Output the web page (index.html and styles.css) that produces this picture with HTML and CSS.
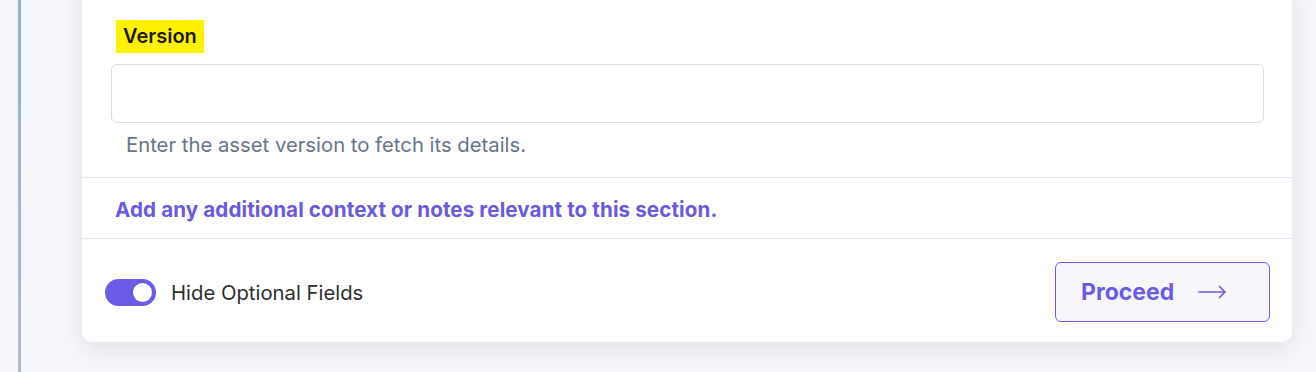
FILE: index.html
```html
<!DOCTYPE html>
<html>

<head>
  <meta charset="UTF-8">
  <title>Asset details</title>
  <link rel="stylesheet" href="styles.css">
</head>

<body>
  <div class="layout">
    <div class="rail"></div>
    <div class="main">
      <div class="card">
        <div class="field">
          <label class="field-label" for="version">Version</label>
          <input id="version" class="field-input" type="text">
          <p class="field-help">Enter the asset version to fetch its details.</p>
        </div>
        <div class="notes">Add any additional context or notes relevant to this section.</div>
        <div class="card-footer">
          <label class="toggle-row">
            <span class="toggle"><span class="toggle-knob"></span></span>
            <span class="toggle-text">Hide Optional Fields</span>
          </label>
          <button class="btn-proceed">
            Proceed
            <svg class="btn-arrow" width="29" height="14" viewBox="0 0 29 14" fill="none">
              <path d="M1 7h26M21.5 1.5L27 7l-5.5 5.5" stroke="currentColor" stroke-width="1.7" stroke-linecap="round" stroke-linejoin="round"/>
            </svg>
          </button>
        </div>
      </div>
    </div>
  </div>
</body>

</html>
```

FILE: styles.css
```css
body {
  margin: 0;
  background-color: #f6f7fb;
  font-family: Inter, "Noto Sans", sans-serif;
}

.layout {
  display: flex;
  height: 372px;
  overflow: hidden;
}

.rail {
  width: 3px;
  margin-left: 18px;
  background: linear-gradient(#93afdd, #b3b8d2);
}

.main {
  flex: 1;
  padding-left: 61px;
  padding-right: 24px;
}

.card {
  margin-top: -20px;
  background: #fff;
  border-radius: 10px;
  box-shadow: 0 6px 24px rgba(30, 35, 70, 0.10);
}

.field {
  padding: 40px 28px 0 29px;
}

.field-label {
  display: inline-block;
  margin-left: 5px;
  padding: 4px 7px;
  background-color: #fff200;
  color: #1a1a1a;
  font-size: 20px;
  font-weight: 600;
  line-height: 25px;
}

.field-input {
  display: block;
  box-sizing: border-box;
  width: 100%;
  height: 59px;
  margin-top: 11px;
  border: 1px solid #dcdcdc;
  border-radius: 6px;
}

.field-help {
  margin: 0;
  padding: 10px 0 20px 15px;
  color: #66758c;
  font-size: 20.3px;
  line-height: 24px;
}

.notes {
  border-top: 1px solid #e3e5ee;
  border-bottom: 1px solid #e3e5ee;
  padding: 20px 33px 16px;
  color: #6a5ae0;
  font-size: 20.6px;
  font-weight: 700;
  letter-spacing: 0.1px;
  line-height: 24px;
}

.card-footer {
  display: flex;
  justify-content: space-between;
  align-items: center;
  padding: 23px 22px 20px 23px;
}

.toggle-row {
  display: flex;
  align-items: center;
  gap: 15px;
}

.toggle {
  display: flex;
  align-items: center;
  justify-content: flex-end;
  width: 51px;
  height: 27px;
  padding: 0 4px;
  box-sizing: border-box;
  border-radius: 14px;
  background: #6b5ce7;
}

.toggle-knob {
  width: 19px;
  height: 19px;
  border-radius: 50%;
  background: #fff;
}

.toggle-text {
  color: #2e2e2e;
  font-size: 20.3px;
}

.btn-proceed {
  display: flex;
  align-items: center;
  gap: 24px;
  width: 215px;
  height: 60px;
  padding: 0 25px;
  border: 1px solid #6b5ce7;
  border-radius: 6px;
  background: #f8f7fe;
  color: #6b5ce7;
  font-family: Inter, sans-serif;
  font-size: 23px;
  font-weight: 700;
}
```
